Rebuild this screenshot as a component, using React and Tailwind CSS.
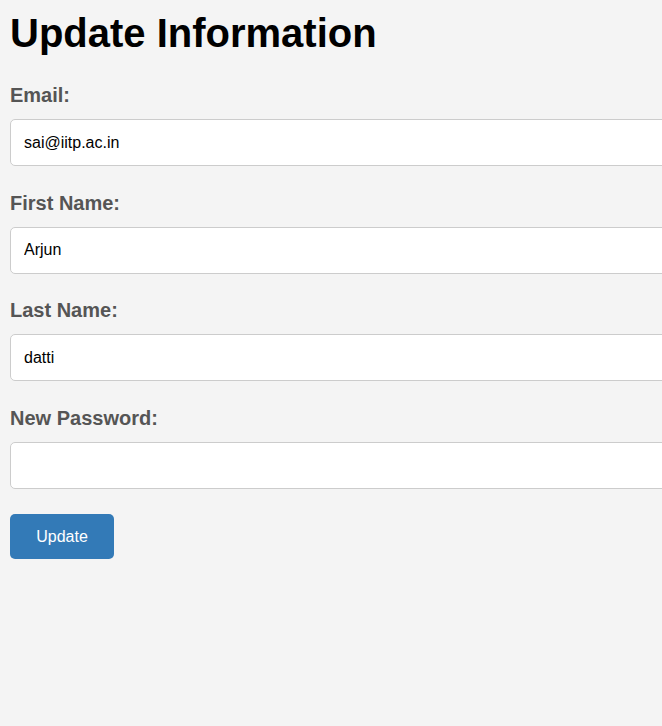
import React, { useState } from "react";

const fields = [
  { name: "email", label: "Email:", type: "email", value: "sai@iitp.ac.in" },
  { name: "firstName", label: "First Name:", type: "text", value: "Arjun" },
  { name: "lastName", label: "Last Name:", type: "text", value: "datti" },
  { name: "password", label: "New Password:", type: "password", value: "" },
];

const App = () => {
  const [form, setForm] = useState(
    Object.fromEntries(fields.map((f) => [f.name, f.value]))
  );

  return (
    <div className="min-h-[726px] w-full overflow-hidden bg-[#f4f4f4] p-[10px] font-['Liberation_Sans',Arial,sans-serif]">
      <h1 className="text-[40px] font-bold leading-[46px] text-black">
        Update Information
      </h1>
      <form className="mt-[28px]" onSubmit={(e) => e.preventDefault()}>
        {fields.map((f) => (
          <div key={f.name} className="mb-[25.5px]">
            <label
              htmlFor={f.name}
              className="block text-[20px] font-bold leading-[23px] text-[#555]"
            >
              {f.label}
            </label>
            <input
              id={f.name}
              type={f.type}
              value={form[f.name]}
              onChange={(e) => setForm({ ...form, [f.name]: e.target.value })}
              className="mt-[12px] block h-[47px] w-[calc(100%+40px)] rounded-[5px] border border-[#ccc] bg-white px-[13px] text-[16px] text-black outline-none"
            />
          </div>
        ))}
        <button
          type="submit"
          className="h-[45px] w-[104px] rounded-[5px] bg-[#337ab7] text-[16px] text-white"
        >
          Update
        </button>
      </form>
    </div>
  );
};

export default App;
